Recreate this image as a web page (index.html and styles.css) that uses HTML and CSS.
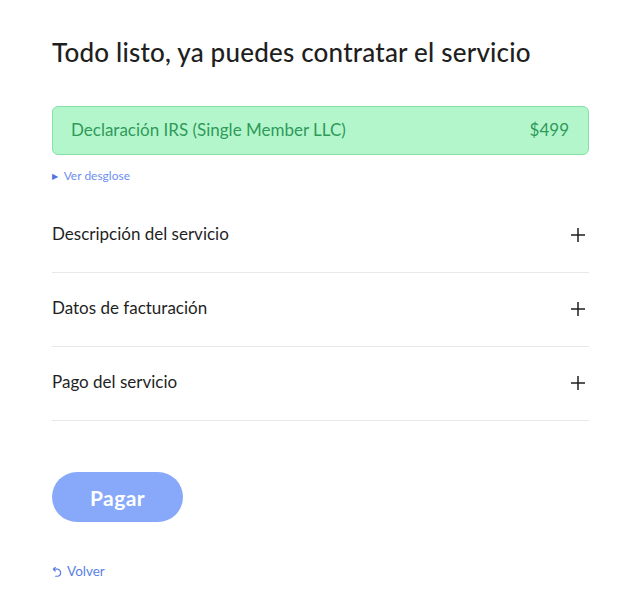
FILE: index.html
```html
<!DOCTYPE html>
<html lang="es">
<head>
<meta charset="utf-8">
<link rel="stylesheet" href="styles.css">
</head>
<body>
<main class="page">
  <h1 class="title">Todo listo, ya puedes contratar el servicio</h1>
  <div class="summary">
    <span class="summary-name">Declaración IRS (Single Member LLC)</span>
    <span class="summary-price">$499</span>
  </div>
  <div class="breakdown"><span class="tri">&#9654;</span> Ver desglose</div>
  <ul class="sections">
    <li class="section"><span>Descripción del servicio</span>
      <svg class="plus" viewBox="0 0 14 14" width="14" height="14"><path d="M7 0v14M0 7h14" stroke="#1f1f1f" stroke-width="1.5"/></svg></li>
    <li class="section"><span>Datos de facturación</span>
      <svg class="plus" viewBox="0 0 14 14" width="14" height="14"><path d="M7 0v14M0 7h14" stroke="#1f1f1f" stroke-width="1.5"/></svg></li>
    <li class="section"><span>Pago del servicio</span>
      <svg class="plus" viewBox="0 0 14 14" width="14" height="14"><path d="M7 0v14M0 7h14" stroke="#1f1f1f" stroke-width="1.5"/></svg></li>
  </ul>
  <button class="pay">Pagar</button>
  <a class="back" href="#">
    <svg viewBox="0 0 12 12" width="11" height="11"><path d="M3.5 1.5L1.5 3.5L3.5 5.5M1.5 3.5H6.5A4 4 0 0 1 6.5 11.2H4" fill="none" stroke="#5a7fe6" stroke-width="1.3" stroke-linecap="round" stroke-linejoin="round"/></svg>
    Volver</a>
</main>
</body>
</html>
```
FILE: styles.css
```css
* { box-sizing: border-box; }
body {
  margin: 0;
  background: #fff;
  font-family: "Lato", "Noto Sans", sans-serif;
  color: #1f1f1f;
}
.page {
  padding: 37px 51px 0 52px;
}
.title {
  margin: 0;
  font-size: 26px;
  line-height: 30px;
  font-weight: 500;
  letter-spacing: 0.2px;
}
.summary {
  margin-top: 39px;
  height: 49px;
  background: #b4f6cc;
  border: 1px solid #86e0a6;
  border-radius: 6px;
  padding: 0 19px 0 18px;
  display: flex;
  align-items: center;
  justify-content: space-between;
  color: #2f9a5a;
  font-size: 17px;
}
.summary > span { position: relative; top: -1px; }
.breakdown {
  margin-top: 14px;
  font-size: 12px;
  line-height: 14px;
  color: #6e8ef0;
}
.tri { font-size: 8px; color: #4f74e8; margin-right: 3px; position: relative; top: -1px; }
.sections {
  list-style: none;
  margin: 15px 0 0;
  padding: 0;
}
.section {
  height: 74px;
  border-bottom: 1px solid #e8e8e8;
  display: flex;
  align-items: center;
  justify-content: space-between;
  font-size: 17px;
  padding: 0 4px 4px 0;
}
.plus { display: block; position: relative; top: 1px; }
.pay {
  display: block;
  margin-top: 51px;
  width: 131px;
  height: 50px;
  border: none;
  border-radius: 25px;
  background: #88a8fa;
  color: #fff;
  font-family: inherit;
  font-size: 21px;
  font-weight: 700;
  letter-spacing: 0.4px;
}
.back {
  margin-top: 40px;
  display: inline-flex;
  align-items: center;
  gap: 4px;
  font-size: 13.5px;
  line-height: 18px;
  color: #5a7fe6;
  text-decoration: none;
}
```
